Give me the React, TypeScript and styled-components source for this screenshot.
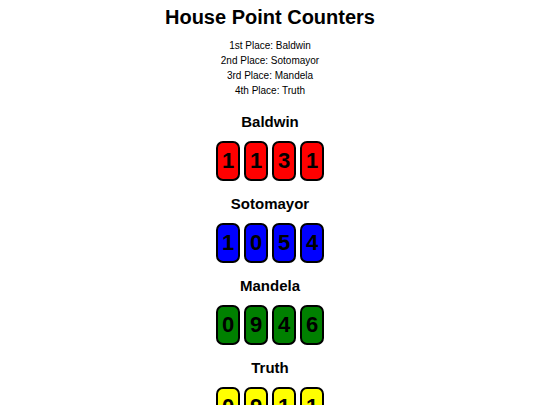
import React from "react";
import styled, { createGlobalStyle } from "styled-components";

const GlobalStyle = createGlobalStyle`
  body {
    margin: 0;
    background: #fff;
    color: #000;
    font-family: "Liberation Sans", Arial, sans-serif;
  }

  html {
    scrollbar-width: none;
  }
`;

const Page = styled.main`
  display: flex;
  flex-direction: column;
  align-items: center;
  padding: 6px 8px;
  text-align: center;
`;

const Title = styled.h1`
  margin: 0 0 10px;
  font-size: 20px;
  line-height: 22px;
`;

const Standings = styled.ol`
  margin: 0;
  padding: 0;
  list-style: none;
  font-size: 10px;
  line-height: 15px;
`;

const Place = styled.li``;

const Houses = styled.div`
  display: grid;
  gap: 14px;
  margin-top: 15px;
`;

const House = styled.section`
  display: flex;
  flex-direction: column;
  align-items: center;
  gap: 10px;
`;

const HouseName = styled.h2`
  margin: 0;
  font-size: 15px;
  line-height: 18px;
`;

const Counter = styled.div`
  display: flex;
  gap: 4px;
`;

const Digit = styled.div<{ $color: string }>`
  display: flex;
  align-items: center;
  justify-content: center;
  box-sizing: border-box;
  width: 24px;
  height: 40px;
  border: 2px solid #000;
  border-radius: 7px;
  background: ${(p) => p.$color};
  font-size: 22px;
  line-height: 24px;
  font-weight: bold;
`;

const houses = [
  { name: "Baldwin", color: "red", points: "1131" },
  { name: "Sotomayor", color: "blue", points: "1054" },
  { name: "Mandela", color: "green", points: "0946" },
  { name: "Truth", color: "yellow", points: "0911" },
];

const ordinals = ["1st", "2nd", "3rd", "4th"];

export default function App() {
  return (
    <>
      <GlobalStyle />
      <Page>
        <Title>House Point Counters</Title>
        <Standings>
          {houses.map((h, i) => (
            <Place key={h.name}>
              {ordinals[i]} Place: {h.name}
            </Place>
          ))}
        </Standings>
        <Houses>
          {houses.map((h) => (
            <House key={h.name}>
              <HouseName>{h.name}</HouseName>
              <Counter>
                {h.points.split("").map((d, i) => (
                  <Digit key={i} $color={h.color}>
                    {d}
                  </Digit>
                ))}
              </Counter>
            </House>
          ))}
        </Houses>
      </Page>
    </>
  );
}
